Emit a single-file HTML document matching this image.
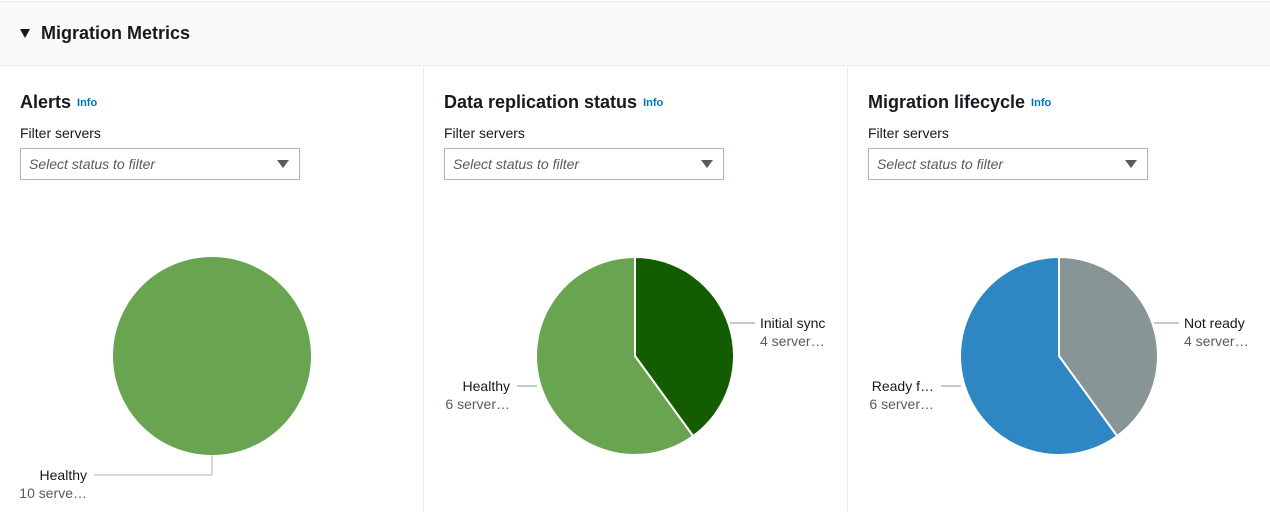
<!DOCTYPE html>
<html><head><style>
body{margin:0;width:1270px;height:532px;background:#fff;font-family:"Liberation Sans",sans-serif;color:#16191f;position:relative;overflow:hidden}
.hdr{position:absolute;left:0;top:1px;width:1270px;height:63px;background:#fafafa;border-top:1px solid #eaeded;border-bottom:1px solid #eaeded}
.hdr span{position:absolute;left:41px;top:21px;font-size:18px;font-weight:bold}
.tri{position:absolute;left:20px;top:27px;width:0;height:0;border-left:5px solid transparent;border-right:5px solid transparent;border-top:9px solid #16191f}
.col{position:absolute;top:66px}
.t{position:absolute;top:26px;font-size:18px;font-weight:bold;white-space:nowrap}
.t i{font-style:normal;font-size:11px;color:#0073bb;margin-left:6px;vertical-align:2px}
.f{position:absolute;top:59px;font-size:14px;white-space:nowrap}
.s{position:absolute;top:82px;width:278px;height:30px;border:1px solid #aab7b8;font-size:14px;font-style:italic;color:#545b64;box-sizing:content-box;white-space:nowrap}
.s span{position:absolute;left:8px;top:7px}
.s b{position:absolute;right:10px;top:11px;border-left:6px solid transparent;border-right:6px solid transparent;border-top:8px solid #545b64}
.div{position:absolute;top:66px;width:1px;height:446px;background:#eaeded}
svg{position:absolute;left:0;top:0}
</style></head><body>
<div class="hdr"><div class="tri"></div><span>Migration Metrics</span></div>
<div class="div" style="left:423px"></div><div class="div" style="left:847px"></div>
<div class="col" style="left:20px"><div class="t">Alerts<i>Info</i></div><div class="f">Filter servers</div><div class="s"><span>Select status to filter</span><b></b></div></div>
<div class="col" style="left:444px"><div class="t">Data replication status<i>Info</i></div><div class="f">Filter servers</div><div class="s"><span>Select status to filter</span><b></b></div></div>
<div class="col" style="left:868px"><div class="t">Migration lifecycle<i>Info</i></div><div class="f">Filter servers</div><div class="s"><span>Select status to filter</span><b></b></div></div>
<svg width="1270" height="532" font-family="Liberation Sans" font-size="14">
<circle cx="212" cy="356" r="99" fill="#69a550"/>
<path d="M212 455V475H94" stroke="#aab7b8" fill="none"/>
<text x="87" y="480" text-anchor="end" fill="#16191f">Healthy</text>
<text x="87" y="498" text-anchor="end" fill="#545b64">10 serve…</text>

<path d="M635 356L635 257A99 99 0 0 1 693.2 436.1Z" fill="#135c00" stroke="#fff" stroke-width="2"/>
<path d="M635 356L693.2 436.1A99 99 0 1 1 635 257Z" fill="#69a550" stroke="#fff" stroke-width="2"/>
<path d="M730 323H755M517 386H537" stroke="#879596"/>
<text x="760" y="328" fill="#16191f">Initial sync</text>
<text x="760" y="346" fill="#545b64">4 server…</text>
<text x="510" y="391" text-anchor="end" fill="#16191f">Healthy</text>
<text x="510" y="409" text-anchor="end" fill="#545b64">6 server…</text>

<path d="M1059 356L1059 257A99 99 0 0 1 1117.2 436.1Z" fill="#879596" stroke="#fff" stroke-width="2"/>
<path d="M1059 356L1117.2 436.1A99 99 0 1 1 1059 257Z" fill="#2e86c3" stroke="#fff" stroke-width="2"/>
<path d="M1154 323H1179M941 386H961" stroke="#879596"/>
<text x="1184" y="328" fill="#16191f">Not ready</text>
<text x="1184" y="346" fill="#545b64">4 server…</text>
<text x="934" y="391" text-anchor="end" fill="#16191f">Ready f…</text>
<text x="934" y="409" text-anchor="end" fill="#545b64">6 server…</text>
</svg>
</body></html>
